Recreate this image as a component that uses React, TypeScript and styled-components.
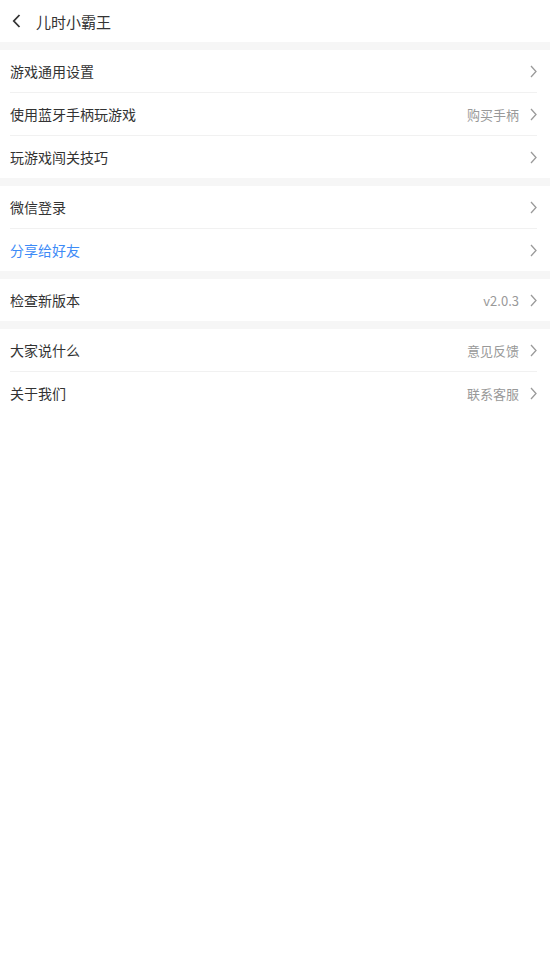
import styled, { createGlobalStyle } from 'styled-components';

const GlobalStyle = createGlobalStyle`
    html, body {
        margin: 0;
        padding: 0;
        background: #ffffff;
    }
    body {
        font-family: "Noto Sans CJK SC", "Noto Sans", sans-serif;
    }
`;

const Page = styled.div`
    width: 550px;
    min-height: 965px;
    background: #ffffff;
    display: flex;
    flex-direction: column;
`;

const Header = styled.div`
    height: 42px;
    display: flex;
    align-items: center;
    padding-left: 10px;
    gap: 14px;
`;

const BackButton = styled.div`
    width: 12px;
    height: 16px;
    display: flex;
    align-items: center;
    justify-content: center;
`;

const Title = styled.div`
    font-size: 15px;
    color: #333333;
`;

const Gap = styled.div`
    height: 8px;
    background: #f6f6f6;
`;

const Group = styled.div`
    display: flex;
    flex-direction: column;
`;

const Row = styled.div`
    height: 42px;
    display: flex;
    align-items: center;
    margin: 0 13px 0 10px;

    & + & {
        border-top: 1px solid #f1f1f1;
    }
`;

const Label = styled.div<{ $highlight?: boolean }>`
    flex: 1;
    font-size: 14px;
    color: ${({ $highlight }) => ($highlight ? '#3d8bf7' : '#333333')};
`;

const Extra = styled.div`
    font-size: 13px;
    color: #999999;
    margin-right: 11px;
`;

const Chevron = () => (
    <svg width="7" height="13" viewBox="0 0 7 13">
        <path d="M1 1 L6 6.5 L1 12" fill="none" stroke="#9a9a9a" strokeWidth="1.3" />
    </svg>
);

type Item = { label: string; extra?: string; highlight?: boolean };

const groups: Item[][] = [
    [
        { label: '游戏通用设置' },
        { label: '使用蓝牙手柄玩游戏', extra: '购买手柄' },
        { label: '玩游戏闯关技巧' },
    ],
    [
        { label: '微信登录' },
        { label: '分享给好友', highlight: true },
    ],
    [{ label: '检查新版本', extra: 'v2.0.3' }],
    [
        { label: '大家说什么', extra: '意见反馈' },
        { label: '关于我们', extra: '联系客服' },
    ],
];

export default function App() {
    return (
        <>
            <GlobalStyle />
            <Page>
                <Header>
                    <BackButton>
                        <svg width="9" height="14" viewBox="0 0 9 14">
                            <path d="M7.5 1 L1.8 7 L7.5 13" fill="none" stroke="#333" strokeWidth="1.8" />
                        </svg>
                    </BackButton>
                    <Title>儿时小霸王</Title>
                </Header>
                {groups.map((group, gi) => (
                    <div key={gi}>
                        <Gap />
                        <Group>
                            {group.map((item) => (
                                <Row key={item.label}>
                                    <Label $highlight={item.highlight}>{item.label}</Label>
                                    {item.extra && <Extra>{item.extra}</Extra>}
                                    <Chevron />
                                </Row>
                            ))}
                        </Group>
                    </div>
                ))}
            </Page>
        </>
    );
}
